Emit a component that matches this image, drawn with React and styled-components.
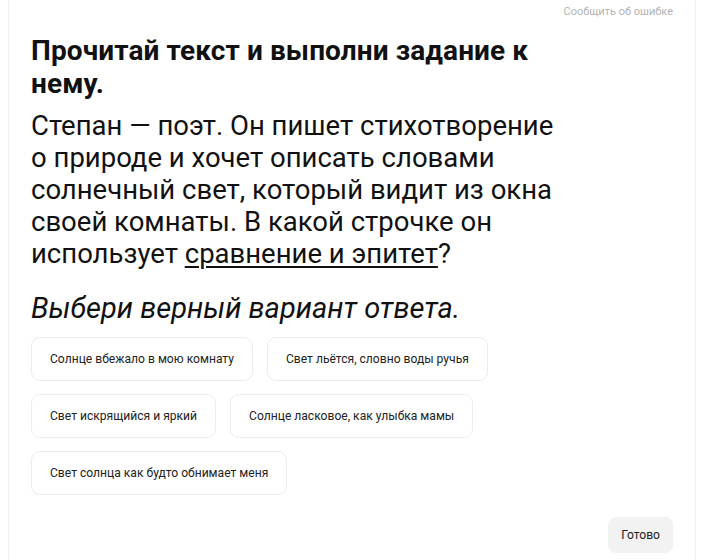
import React from 'react';
import styled, { createGlobalStyle } from 'styled-components';

const GlobalStyle = createGlobalStyle`
  body {
    margin: 0;
    background: #fff;
    font-family: Roboto, "Noto Sans", sans-serif;
    color: #111;
  }
`;

const Card = styled.div`
  margin: 0 15px 0 8px;
  min-height: 560px;
  box-sizing: border-box;
  border-left: 1px solid #efefef;
  border-right: 1px solid #efefef;
  padding: 4px 22px 0 22px;
  display: flex;
  flex-direction: column;
`;

const TopBar = styled.div`
  display: flex;
  justify-content: flex-end;
`;

const ReportLink = styled.a`
  font-size: 11px;
  line-height: 16px;
  color: #b3b3b3;
  cursor: pointer;
`;

const Title = styled.h1`
  margin: 14px 0 0;
  max-width: 540px;
  font-size: 28px;
  line-height: 33px;
  font-weight: 700;
  letter-spacing: 0.1px;
`;

const Body = styled.p`
  margin: 10px 0 0;
  max-width: 540px;
  font-size: 27.5px;
  line-height: 32px;
  font-weight: 400;
`;

const Term = styled.span`
  text-decoration: underline;
  text-underline-offset: 3px;
  text-decoration-thickness: 1.5px;
`;

const Hint = styled.p`
  margin: 21px 0 0;
  font-size: 29px;
  line-height: 34px;
  font-style: italic;
`;

const Options = styled.div`
  margin-top: 12px;
  display: flex;
  flex-wrap: wrap;
  gap: 13px 14px;
  max-width: 500px;
`;

const Option = styled.button`
  height: 44px;
  padding: 0 18px;
  border: 1px solid #ececec;
  border-radius: 9px;
  background: #fff;
  font-family: inherit;
  font-size: 12.1px;
  color: #222;
  cursor: pointer;
`;

const Footer = styled.div`
  margin-top: 22px;
  display: flex;
  justify-content: flex-end;
`;

const DoneButton = styled.button`
  height: 36px;
  padding: 0 13px;
  border: none;
  border-radius: 8px;
  background: #f2f2f2;
  font-family: inherit;
  font-size: 12.1px;
  color: #222;
  cursor: pointer;
`;

const answers = [
  'Солнце вбежало в мою комнату',
  'Свет льётся, словно воды ручья',
  'Свет искрящийся и яркий',
  'Солнце ласковое, как улыбка мамы',
  'Свет солнца как будто обнимает меня',
];

export default function App() {
  return (
    <>
      <GlobalStyle />
      <Card>
        <TopBar>
          <ReportLink>Сообщить об ошибке</ReportLink>
        </TopBar>
        <Title>Прочитай текст и выполни задание к нему.</Title>
        <Body>
          Степан — поэт. Он пишет стихотворение о природе и хочет описать словами
          солнечный свет, который видит из окна своей комнаты. В какой строчке он
          использует <Term>сравнение и эпитет</Term>?
        </Body>
        <Hint>Выбери верный вариант ответа.</Hint>
        <Options>
          {answers.map((a) => (
            <Option key={a}>{a}</Option>
          ))}
        </Options>
        <Footer>
          <DoneButton>Готово</DoneButton>
        </Footer>
      </Card>
    </>
  );
}
